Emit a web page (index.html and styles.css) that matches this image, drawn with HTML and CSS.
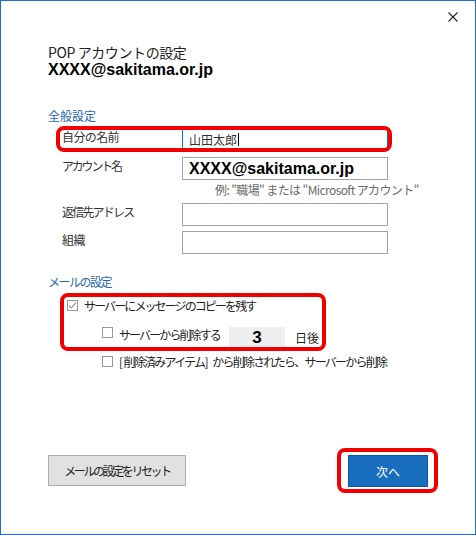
FILE: index.html
```html
<!DOCTYPE html>
<html lang="ja">
<head>
<meta charset="utf-8">
<link rel="stylesheet" href="styles.css">
</head>
<body>
<div class="window">
  <button class="close" aria-label="閉じる">
    <svg width="10" height="10" viewBox="0 0 10 10"><path d="M0.5 0.5L9.5 9.5M9.5 0.5L0.5 9.5" stroke="#222" stroke-width="1.1" fill="none"/></svg>
  </button>

  <div class="header">
    <div class="title">POP アカウントの設定</div>
    <div class="email">XXXX@sakitama.or.jp</div>
  </div>

  <div class="section-title general">全般設定</div>

  <div class="row row-name highlight-name">
    <div class="label">自分の名前</div>
    <div class="input focused"><span class="value">山田太郎</span><span class="caret"></span></div>
  </div>
  <div class="row row-account">
    <div class="label kana-label">アカウント名</div>
    <div class="input"><span class="value bold">XXXX@sakitama.or.jp</span></div>
  </div>
  <div class="hint">例: "職場" または "Microsoft アカウント"</div>
  <div class="row row-reply">
    <div class="label reply-label">返信先アドレス</div>
    <div class="input"></div>
  </div>
  <div class="row row-org">
    <div class="label">組織</div>
    <div class="input"></div>
  </div>

  <div class="section-title mail">メールの設定</div>

  <div class="mail-group">
    <div class="check-row first">
      <span class="box checked">
        <svg width="9" height="9" viewBox="0 0 9 9"><path d="M1 4.6L3.4 7L8 1.6" stroke="#8a8a8a" stroke-width="1.1" fill="none"/></svg>
      </span>
      <span class="check-text">サーバーにメッセージのコピーを残す</span>
    </div>
    <div class="check-row sub days">
      <span class="box"></span>
      <span class="check-text">サーバーから削除する</span>
      <span class="num">3</span>
      <span class="unit">日後</span>
    </div>
  </div>
  <div class="check-row sub last">
    <span class="box"></span>
    <span class="check-text"><span class="br">[</span>削除済みアイテム<span class="br">] </span>から削除されたら、サーバーから削除</span>
  </div>

  <div class="buttons">
    <button class="btn reset">メールの設定をリセット</button>
    <span class="next-wrap"><button class="btn next">次へ</button></span>
  </div>
</div>
</body>
</html>
```

FILE: styles.css
```css
*, *::before, *::after { box-sizing: border-box; }
html, body { margin: 0; padding: 0; background: #fff; }
body {
  font-family: "Noto Sans CJK JP", "Liberation Sans", sans-serif;
  color: #222;
}
.window {
  position: relative;
  width: 476px;
  height: 535px;
  border: 1px solid #1c71c9;
  background: #fff;
  padding: 42px 47px 47px 47px;
  display: flex;
  flex-direction: column;
}
.close {
  position: absolute;
  top: 11px;
  right: 17px;
  width: 10px;
  height: 10px;
  padding: 0;
  border: 0;
  background: none;
  display: block;
}
.close svg { display: block; }

.title {
  font-size: 14px;
  line-height: 18px;
  color: #222;
  letter-spacing: -0.4px;
}
.email {
  font-family: "Liberation Sans", Arial, sans-serif;
  font-weight: bold;
  font-size: 16px;
  line-height: 18px;
  color: #000;
}
.section-title {
  font-size: 12px;
  line-height: 16px;
  color: #2468b0;
}
.section-title.general { margin-top: 29px; }
.section-title.mail { margin-top: 20px; letter-spacing: -1.5px; }

.row {
  display: flex;
  align-items: flex-start;
  margin-left: 14px;
  width: 326px;
  height: 23px;
}
.row-name { margin-top: 4px; }
.row-account { margin-top: 6px; }
.row-reply { margin-top: 5px; }
.row-org { margin-top: 5px; }
.label {
  width: 120px;
  flex: none;
  font-size: 12px;
  line-height: 18px;
  color: #333;
  letter-spacing: -0.6px;
}
.kana-label { letter-spacing: -2.2px; }
.reply-label { letter-spacing: -1.8px; }
.input {
  width: 206px;
  height: 23px;
  border: 1px solid #a5a5a5;
  display: flex;
  align-items: center;
  padding-left: 6px;
  font-size: 12px;
}
.input.focused { border-color: #0078d7; }
.value { color: #333; line-height: 16px; }
.value.bold {
  font-family: "Liberation Sans", Arial, sans-serif;
  font-weight: bold;
  font-size: 16px;
  color: #000;
}
.caret {
  display: inline-block;
  width: 1px;
  height: 13px;
  background: #000;
  margin-left: 1px;
}
.highlight-name { position: relative; }
.highlight-name::after {
  content: "";
  position: absolute;
  left: -6px;
  right: -4px;
  top: -2px;
  bottom: -1px;
  border: 4px solid #f00000;
  border-radius: 8px;
  pointer-events: none;
}
.hint {
  margin-left: 167px;
  margin-top: 2px;
  height: 16px;
  font-size: 12px;
  line-height: 16px;
  color: #6a6a6a;
  letter-spacing: -0.6px;
  white-space: nowrap;
}

.mail-group {
  position: relative;
  margin-top: 7px;
}
.mail-group::after {
  content: "";
  position: absolute;
  left: 12px;
  top: -4px;
  width: 266px;
  height: 58px;
  border: 4px solid #f00000;
  border-radius: 8px;
  pointer-events: none;
}
.check-row {
  display: flex;
  align-items: flex-start;
  font-size: 12px;
  line-height: 18px;
  color: #222;
}
.check-text { letter-spacing: -1.9px; white-space: nowrap; }
.last .check-text { letter-spacing: -1.75px; }
.last .check-text .br { letter-spacing: 0.5px; }
.check-row.first { margin-left: 19px; }
.check-row.sub { margin-left: 54px; }
.check-row.days { margin-top: 12px; }
.check-row.last { margin-top: 4px; }
.box {
  width: 11px;
  height: 11px;
  border: 1px solid #999;
  background: #fff;
  margin-top: 3px;
  margin-right: 6px;
  display: flex;
  align-items: center;
  justify-content: center;
  flex: none;
}
.days .box { margin-top: 0; }
.days .check-text { margin-top: -1px; }
.box svg { display: block; }
.num {
  width: 56px;
  height: 22px;
  margin-left: 9px;
  background: #efefef;
  font-family: "Liberation Sans", Arial, sans-serif;
  font-weight: bold;
  font-size: 17px;
  line-height: 22px;
  text-align: center;
  color: #000;
}
.unit {
  margin-left: 10px;
  line-height: 22px;
}

.buttons {
  margin-top: auto;
  display: flex;
  justify-content: space-between;
  align-items: flex-start;
}
.btn {
  font-family: "Noto Sans CJK JP", "Liberation Sans", sans-serif;
  font-size: 12px;
  padding: 0;
  margin: 0;
}
.reset {
  width: 138px;
  height: 31px;
  background: #e1e1e1;
  border: 1px solid #adadad;
  color: #222;
  letter-spacing: -2.4px;
}
.next-wrap { position: relative; display: block; }
.next-wrap::after {
  content: "";
  position: absolute;
  left: -11px;
  right: -10px;
  top: -7px;
  bottom: -6px;
  border: 4px solid #f00000;
  border-radius: 8px;
  pointer-events: none;
}
.next {
  display: block;
  width: 80px;
  height: 32px;
  background: #1a6ec0;
  border: 1px solid #0d5aa8;
  color: #fff;
}
```
